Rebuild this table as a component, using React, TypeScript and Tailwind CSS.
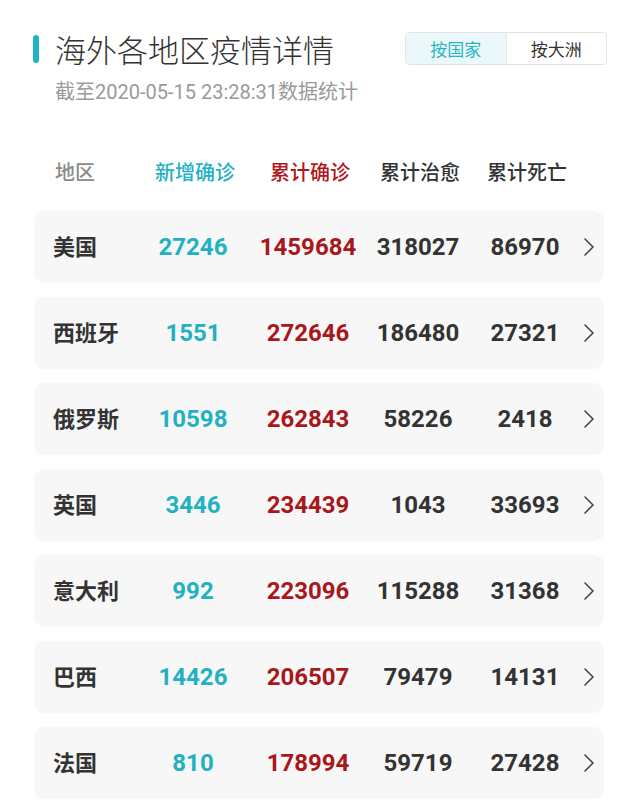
import React from "react"

type Row = {
  name: string
  added: string
  confirmed: string
  cured: string
  dead: string
}

const rows: Row[] = [
  { name: "美国", added: "27246", confirmed: "1459684", cured: "318027", dead: "86970" },
  { name: "西班牙", added: "1551", confirmed: "272646", cured: "186480", dead: "27321" },
  { name: "俄罗斯", added: "10598", confirmed: "262843", cured: "58226", dead: "2418" },
  { name: "英国", added: "3446", confirmed: "234439", cured: "1043", dead: "33693" },
  { name: "意大利", added: "992", confirmed: "223096", cured: "115288", dead: "31368" },
  { name: "巴西", added: "14426", confirmed: "206507", cured: "79479", dead: "14131" },
  { name: "法国", added: "810", confirmed: "178994", cured: "59719", dead: "27428" },
]

const font = { fontFamily: '"Noto Sans CJK SC", Roboto, sans-serif' }
const numFont = { fontFamily: 'Roboto, "Noto Sans CJK SC", sans-serif' }

// column widths shared by head and rows
const cols = "grid grid-cols-[87px_106px_124px_96px_118px] items-center"

function Cell({ children, className }: { children: React.ReactNode; className?: string }) {
  return <div className={"flex justify-center whitespace-nowrap " + (className ?? "")}>{children}</div>
}

export default function App() {
  return (
    <div className="min-h-[800px] bg-white pl-[33px] pr-[33px] pt-[30px] text-[#333]" style={font}>
      {/* header */}
      <div className="flex items-start justify-between">
        <div>
          <div className="flex items-center">
            <div className="h-[28px] w-[6px] rounded-full bg-[#1fb3c4]" />
            <h1 className="ml-[16px] text-[31px] font-light leading-[38px] text-[#333]">海外各地区疫情详情</h1>
          </div>
          <div className="ml-[22px] mt-[11px] text-[20px] leading-[26px] text-[#9a9a9a]" style={numFont}>
            截至2020-05-15 23:28:31数据统计
          </div>
        </div>
        <div className="mt-[2px] flex h-[33px] w-[202px] overflow-hidden rounded-[4px] border border-[#e3e3e3] text-[17px]">
          <div className="flex flex-1 items-center justify-center bg-[#ebf8fa] text-[#2ab4c5]">按国家</div>
          <div className="flex flex-1 items-center justify-center border-l border-[#e6e6e6] text-[#333]">按大洲</div>
        </div>
      </div>

      {/* table head */}
      <div className={cols + " ml-[1px] mt-[47px] h-[40px] pl-[21px] text-[20px] font-medium"}>
        <div className="text-[#8a8a8a]">地区</div>
        <Cell className="text-[#22b1c3]">新增确诊</Cell>
        <Cell className="text-[#b0191e]">累计确诊</Cell>
        <Cell className="text-[#333]">累计治愈</Cell>
        <Cell className="text-[#333]">累计死亡</Cell>
      </div>

      {/* rows */}
      <div className="mr-[3px] mt-[19px] flex flex-col gap-[14px]">
        {rows.map((r) => (
          <div key={r.name} className="ml-[1px] flex h-[72px] items-center rounded-[10px] bg-[#f7f7f7] pl-[19px]">
            <div className={cols}>
              <div className="mb-[4px] text-[22px] font-bold text-[#333]">{r.name}</div>
              <Cell className="text-[24px] font-bold text-[#22b1c3]">
                <span style={numFont}>{r.added}</span>
              </Cell>
              <Cell className="text-[24px] font-bold text-[#a8171c]">
                <span style={numFont}>{r.confirmed}</span>
              </Cell>
              <Cell className="text-[24px] font-bold text-[#333]">
                <span style={numFont}>{r.cured}</span>
              </Cell>
              <Cell className="text-[24px] font-bold text-[#333]">
                <span style={numFont}>{r.dead}</span>
              </Cell>
            </div>
            <svg width="12" height="20" viewBox="0 0 12 20" fill="none">
              <polyline points="1,2 9,10 1,18" stroke="#444" strokeWidth="1.6" strokeLinecap="round" strokeLinejoin="round" />
            </svg>
          </div>
        ))}
      </div>
    </div>
  )
}
